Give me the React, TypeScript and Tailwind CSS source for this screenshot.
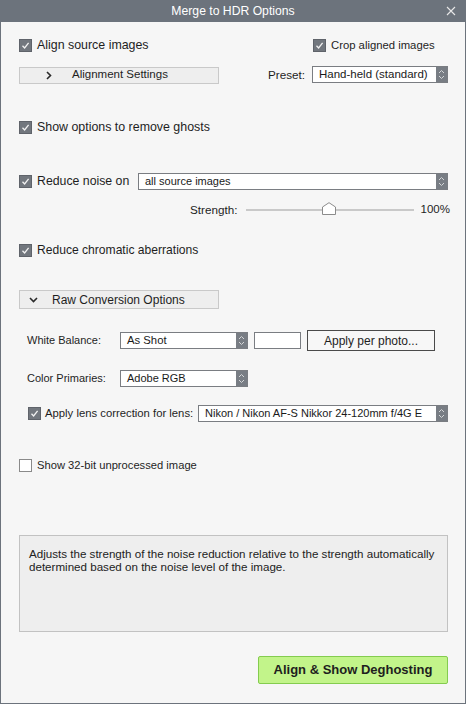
import React from "react";

const font = { fontFamily: "Tahoma, 'Liberation Sans', Arial, sans-serif" };

function Check({ checked = true }: { checked?: boolean }) {
  return checked ? (
    <span className="flex h-[13px] w-[13px] shrink-0 items-center justify-center border border-[#5f636a] bg-[#72777e]">
      <svg width="9" height="9" viewBox="0 0 9 9">
        <path d="M1.5 4.8 L3.6 7 L7.6 1.8" fill="none" stroke="#f2f2f2" strokeWidth="1.3" />
      </svg>
    </span>
  ) : (
    <span className="h-[13px] w-[13px] shrink-0 border border-[#8a8a8a] bg-white" />
  );
}

function SelectBox({ value, className }: { value: string; className: string }) {
  return (
    <div className={`flex h-[17px] items-stretch border border-[#7a7d82] bg-white ${className}`}>
      <span className="flex-1 overflow-hidden whitespace-nowrap pl-[6px] leading-[15px] text-[#1a1a1a]">{value}</span>
      <span className="flex w-[11px] shrink-0 items-center justify-center bg-[#787d84]">
        <svg width="7" height="11" viewBox="0 0 7 11">
          <path d="M1 4 L3.5 1.5 L6 4 M1 7 L3.5 9.5 L6 7" fill="none" stroke="#d4d6d8" strokeWidth="1" />
        </svg>
      </span>
    </div>
  );
}

export default function App() {
  return (
    <div className="flex h-[704px] w-[466px] flex-col bg-[#6c737c]" style={font}>
      {/* Title bar */}
      <div className="relative flex h-[22px] items-center justify-center text-[12.2px] text-white">
        Merge to HDR Options
        <svg className="absolute right-[10px] top-[6px]" width="10" height="10" viewBox="0 0 10 10">
          <path d="M1 1 L9 9 M9 1 L1 9" stroke="#e8e8e8" strokeWidth="1.1" />
        </svg>
      </div>

      <div className="mx-px mb-px flex flex-1 flex-col bg-[#f6f6f6] pl-[18px] pr-[17px] text-[12px] text-[#1e1e1e]">
        {/* Align / crop */}
        <div className="mt-[14px] flex h-[18px] items-center">
          <div className="flex flex-1 items-center gap-[5px]">
            <Check />
            <span className="text-[12.4px]">Align source images</span>
          </div>
          <div className="flex w-[135px] items-center gap-[5px]">
            <Check />
            <span className="text-[11.3px]">Crop aligned images</span>
          </div>
        </div>

        <div className="mt-[12px] flex h-[18px] items-center">
          <div className="flex h-[17px] w-[200px] items-center border border-[#c9c9c9] bg-[#eeeeee]">
            <svg className="ml-[26px]" width="6" height="9" viewBox="0 0 6 9">
              <path d="M1 1 L4.5 4.5 L1 8" fill="none" stroke="#2a2a2a" strokeWidth="1.6" />
            </svg>
            <span className="ml-[20px] text-[11.5px]">Alignment Settings</span>
          </div>
          <div className="flex flex-1 items-center justify-end">
            <span className="mr-[7px] text-[11.7px]">Preset:</span>
            <SelectBox value="Hand-held (standard)" className="w-[136px] text-[11.5px]" />
          </div>
        </div>

        <div className="mt-[34px] flex h-[18px] items-center gap-[5px]">
          <Check />
          <span className="text-[12.4px]">Show options to remove ghosts</span>
        </div>

        {/* Noise */}
        <div className="mt-[36px] flex h-[18px] items-center">
          <Check />
          <span className="ml-[5px] text-[12.3px]">Reduce noise on</span>
          <SelectBox value="all source images" className="ml-auto w-[310px] text-[11px]" />
        </div>

        <div className="mt-[11px] flex h-[18px] items-center">
          <span className="ml-[171px] w-[56px] text-[11.7px]">Strength:</span>
          <div className="relative h-[2px] w-[168px] bg-[#c9c9c9]">
            <svg className="absolute left-[76px] top-[-7px]" width="14" height="13" viewBox="0 0 14 13">
              <path d="M0.5 12.5 V5 L7 0.7 L13.5 5 V12.5 Z" fill="#ffffff" stroke="#8b8b8b" strokeWidth="1" />
            </svg>
          </div>
          <span className="ml-auto mr-[-2px] text-[11.5px]">100%</span>
        </div>

        <div className="mt-[22px] flex h-[18px] items-center gap-[5px]">
          <Check />
          <span className="text-[12.1px]">Reduce chromatic aberrations</span>
        </div>

        {/* Raw conversion */}
        <div className="mt-[31px] flex h-[19px] w-[200px] items-center border border-[#c9c9c9] bg-[#eeeeee]">
          <svg className="ml-[9px]" width="9" height="6" viewBox="0 0 9 6">
            <path d="M1 1 L4.5 4.5 L8 1" fill="none" stroke="#2a2a2a" strokeWidth="1.6" />
          </svg>
          <span className="ml-[14px]">Raw Conversion Options</span>
        </div>

        <div className="mt-[21px] flex h-[21px] items-center">
          <span className="ml-[8px] w-[93px] text-[11px]">White Balance:</span>
          <SelectBox value="As Shot" className="w-[128px] text-[11.3px]" />
          <span className="ml-[6px] h-[17px] w-[47px] border border-[#7a7d82] bg-white" />
          <span className="ml-[6px] flex h-[21px] w-[128px] items-center justify-center border border-[#4a4a4a] bg-[#f7f7f7]">
            Apply per photo...
          </span>
        </div>

        <div className="mt-[18px] flex h-[18px] items-center">
          <span className="ml-[8px] w-[93px] text-[11px]">Color Primaries:</span>
          <SelectBox value="Adobe RGB" className="w-[128px] text-[11px]" />
        </div>

        <div className="mt-[17px] flex h-[18px] items-center">
          <span className="ml-[9px]" />
          <Check />
          <span className="ml-[4px] whitespace-nowrap text-[11.3px]">Apply lens correction for lens:</span>
          <SelectBox value="Nikon / Nikon AF-S Nikkor 24-120mm f/4G E" className="ml-auto w-[250px] text-[11px]" />
        </div>

        <div className="mt-[34px] flex h-[18px] items-center gap-[5px]">
          <Check checked={false} />
          <span className="text-[11.2px]">Show 32-bit unprocessed image</span>
        </div>

        {/* Description */}
        <div className="mt-[61px] h-[97px] whitespace-nowrap border border-[#c2c2c2] bg-[#eeeeee] px-[9px] pt-[11px] text-[11.6px] leading-[13px] text-[#222]">
          Adjusts the strength of the noise reduction relative to the strength automatically
          <br />
          determined based on the noise level of the image.
        </div>

        <div className="mt-[24px] flex justify-end">
          <button className="flex h-[28px] w-[190px] items-center justify-center rounded-[2px] border border-[#84cc4f] bg-[#c2f48a] text-[13px] font-bold text-[#1e1e1e]">
            Align &amp; Show Deghosting
          </button>
        </div>
      </div>
    </div>
  );
}
